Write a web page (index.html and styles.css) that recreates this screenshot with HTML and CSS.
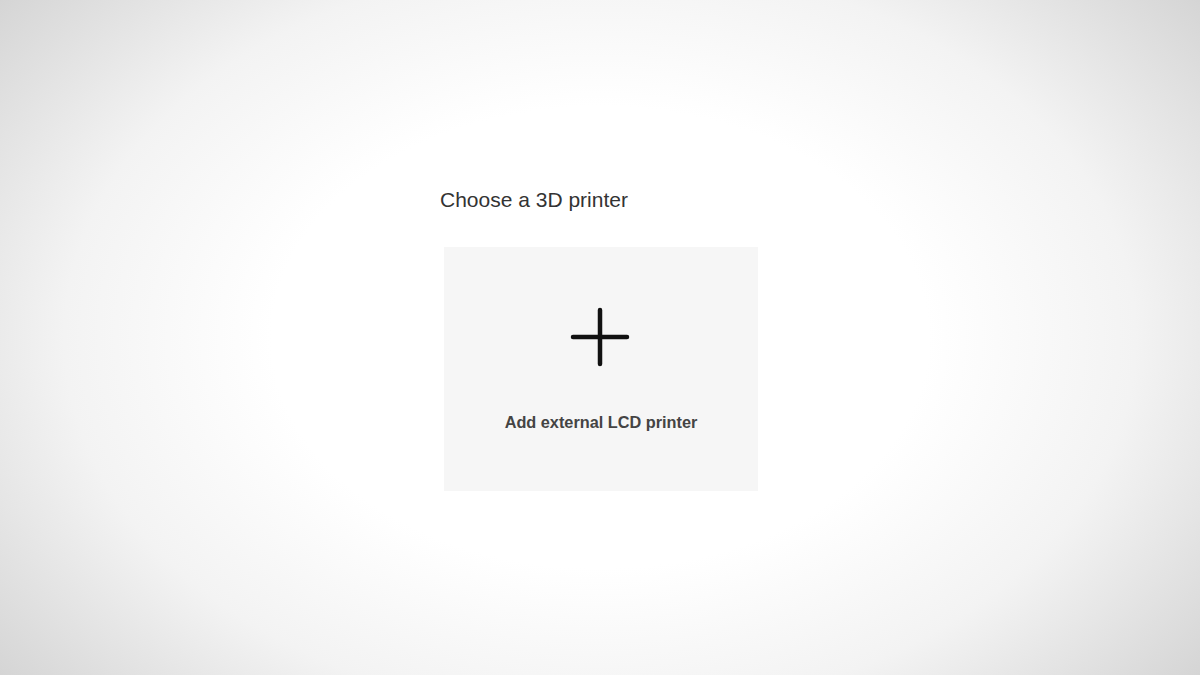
FILE: index.html
```html
<!DOCTYPE html>
<html lang="en">
<head>
    <meta charset="UTF-8">
    <meta name="viewport" content="width=device-width, initial-scale=1.0">
    <title>Choose a 3D printer</title>
    <link rel="stylesheet" href="styles.css">
</head>
<body>
    <div class="chooser">
        <h1>Choose a 3D printer</h1>
        <div class="printer-card">
            <svg class="plus" width="60" height="60" viewBox="0 0 60 60">
                <path d="M30 3 V57 M3 30 H57" stroke="#111" stroke-width="4.5" stroke-linecap="round" fill="none"/>
            </svg>
            <p>Add external LCD printer</p>
        </div>
    </div>
</body>
</html>
```

FILE: styles.css
```css
* {
    margin: 0;
    padding: 0;
    box-sizing: border-box;
    font-family: 'Liberation Sans', Arial, sans-serif;
}

body {
    width: 1200px;
    height: 675px;
    overflow: hidden;
    background: radial-gradient(ellipse 72% 90% at 50% 50%, #ffffff 38%, #f3f3f3 62%, #d6d6d6 88%, #c6c6c6 100%);
}

.chooser {
    width: 320px;
    margin: 0 auto;
    padding-top: 186px;
}

h1 {
    font-size: 21px;
    font-weight: 400;
    color: #333;
    line-height: 28px;
    margin-bottom: 33px;
}

.printer-card {
    width: 314px;
    height: 244px;
    margin-left: 4px;
    background: #f6f6f6;
    display: flex;
    flex-direction: column;
    align-items: center;
    padding-top: 60px;
}

.plus {
    margin-left: -2px;
}

.printer-card p {
    margin-top: 46px;
    font-size: 16.3px;
    font-weight: 700;
    color: #444;
}
```
